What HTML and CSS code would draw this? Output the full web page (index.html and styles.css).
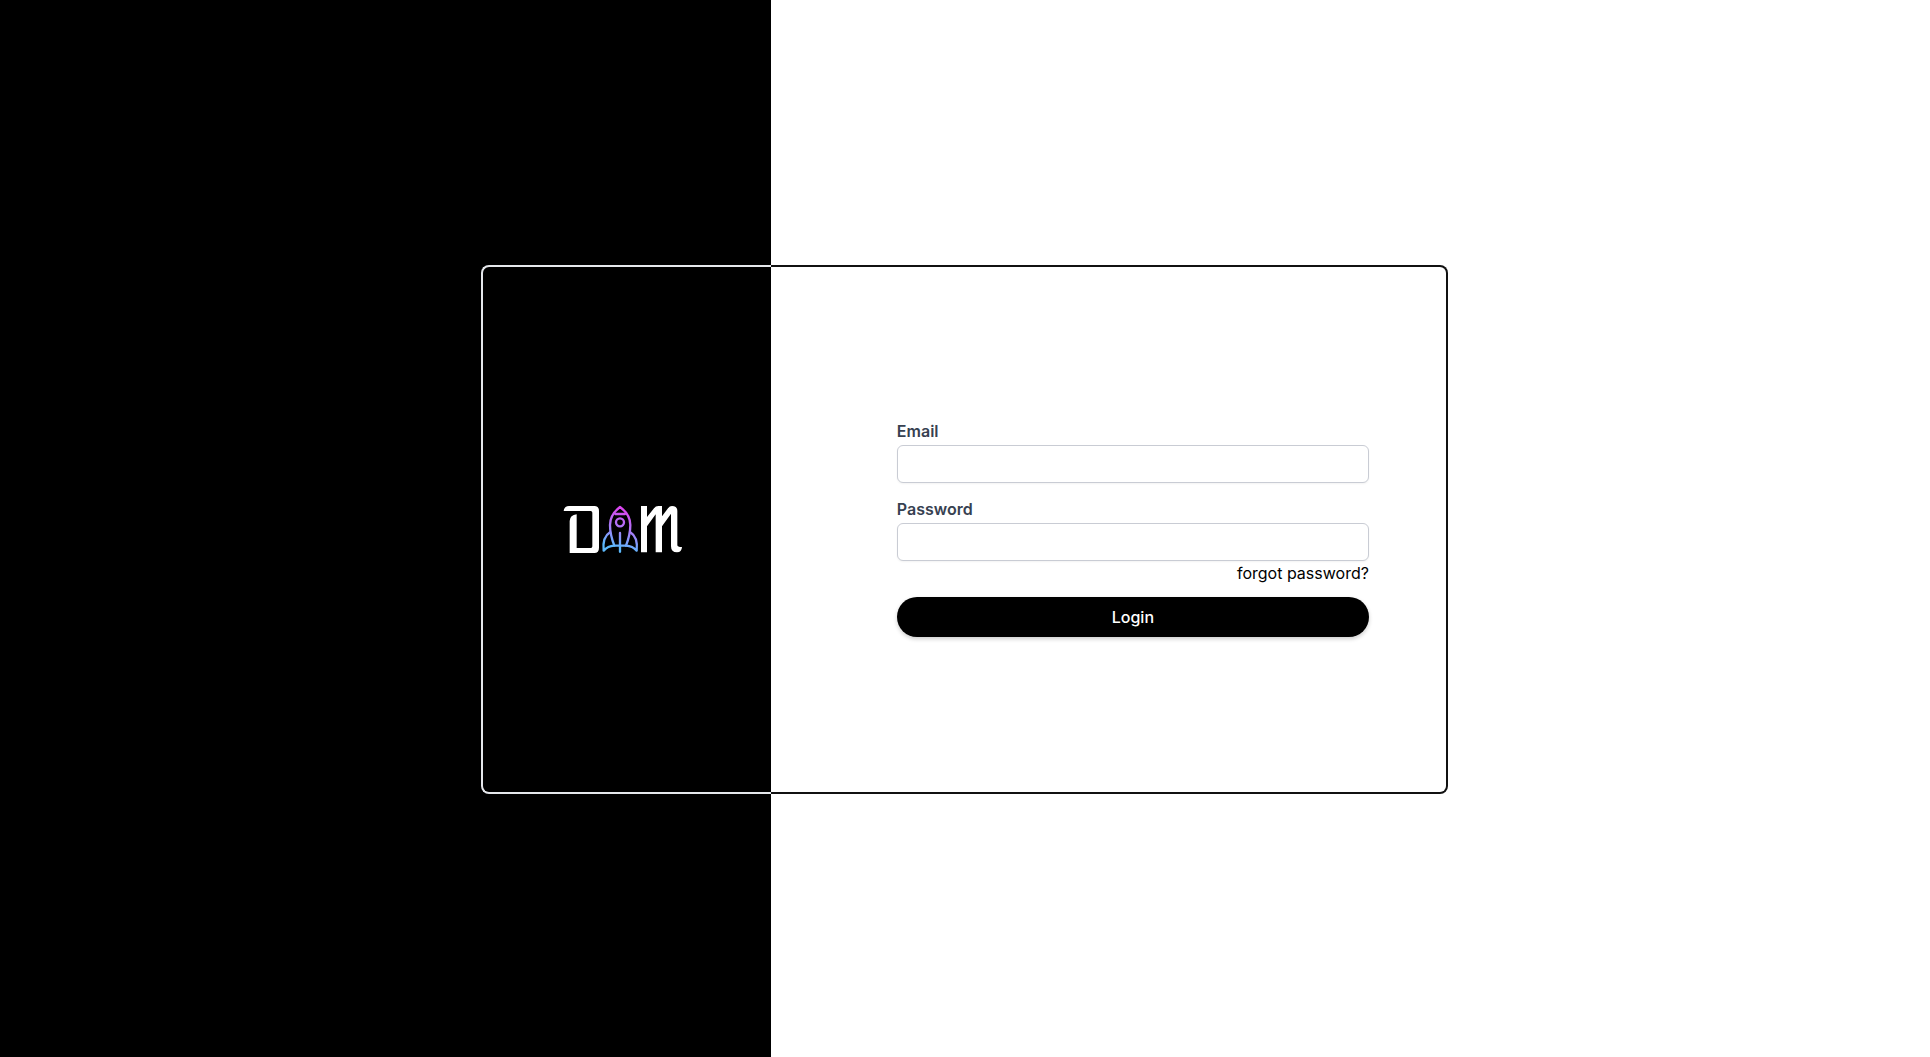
FILE: index.html
```html
<!DOCTYPE html>
<html lang="en">
<head>
<meta charset="utf-8">
<meta name="viewport" content="width=device-width, initial-scale=1">
<title>DAM – Login</title>
<link rel="stylesheet" href="styles.css">
</head>
<body>
<main class="page">
  <section class="side side-dark">
    <div class="card card-brand">
      <svg class="logo" viewBox="36 44 360 147" role="img" aria-label="DAM">
        <defs>
          <linearGradient id="rocket" gradientUnits="userSpaceOnUse" x1="225" y1="60" x2="190" y2="170">
            <stop offset="0" stop-color="#d946ef"/>
            <stop offset=".5" stop-color="#a97bf8"/>
            <stop offset="1" stop-color="#5bb8fb"/>
          </linearGradient>
        </defs>
        <path fill="#fff" d="M38 62Q40 47 54 47H130Q144 47 144 62V172Q144 188 130 188H56V92Q57 74 77 72V173H120Q124 173 124 168V67Q124 62 119 62Z"/>
        <g fill="none" stroke="url(#rocket)" stroke-width="7" stroke-linejoin="round" stroke-linecap="round">
          <path d="M207 50C186 66 177 84 177 104C177 128 183 148 190 166H225C232 148 238 128 238 104C238 84 229 66 207 50Z"/>
          <path d="M193 71H222M207 128V184"/>
          <circle cx="207" cy="96" r="12"/>
          <path d="M177 126C161 136 155 154 158 181C166 172 176 167 190 166M238 126C254 136 260 154 257 181C249 172 239 167 225 166"/>
        </g>
        <path fill="#fff" d="M270 47H288V80L309 54Q314 47 322 47H333V78L351 54Q356 47 363 47Q379 47 379 62V164Q379 170 393 170Q392 186 378 186Q360 186 360 168V70L333 108V186H314V72L288 108V186H270Z"/>
      </svg>
    </div>
  </section>
  <section class="side side-light">
    <div class="card card-form">
      <form class="form">
        <div class="field">
          <label for="email">Email</label>
          <input id="email" type="email" name="email">
        </div>
        <div class="field">
          <label for="password">Password</label>
          <input id="password" type="password" name="password">
        </div>
        <a class="forgot" href="#">forgot password?</a>
        <button class="login" type="submit">Login</button>
      </form>
    </div>
  </section>
</main>
</body>
</html>
```
FILE: styles.css
```css
* {
  box-sizing: border-box;
}

body {
  margin: 0;
  background: #fff;
  color: #000;
  font-family: Inter, "Liberation Sans", sans-serif;
  font-size: 16px;
  line-height: 24px;
}

.page {
  display: flex;
  min-height: 100vh;
}

.side {
  display: flex;
  align-items: center;
  padding-top: 2px;
}

.side-dark {
  width: 39.95%;
  justify-content: flex-end;
  background: #000;
}

.side-light {
  width: 60.05%;
}

.card {
  display: flex;
  align-items: center;
  min-height: 50vh;
  border: 2px solid;
}

.card-brand {
  width: 37.6%;
  justify-content: center;
  padding-right: 8px;
  border-color: #e5e7eb;
  border-right: 0;
  border-radius: 8px 0 0 8px;
}

.card-form {
  width: 58.4%;
  justify-content: flex-end;
  padding-right: 77px;
  padding-bottom: 3px;
  border-color: #111;
  border-left: 0;
  border-radius: 0 8px 8px 0;
}

.logo {
  width: 120px;
  height: 49px;
}

.form {
  display: flex;
  flex-direction: column;
  width: 472px;
}

.field {
  display: flex;
  flex-direction: column;
  gap: 2px;
}

.field + .field {
  margin-top: 14px;
}

.field label {
  color: #374151;
  font-weight: 600;
}

.field input {
  height: 38px;
  padding: 8px 12px;
  border: 1px solid #c9ccd4;
  border-radius: 6px;
  background: #fff;
  box-shadow: 0 1px 2px rgba(0, 0, 0, .05);
  font: inherit;
}

.forgot {
  align-self: flex-end;
  color: #000;
  text-decoration: none;
}

.login {
  height: 40px;
  margin-top: 12px;
  border: 0;
  border-radius: 20px;
  background: #000;
  box-shadow: 0 2px 4px rgba(0, 0, 0, .2);
  color: #fff;
  font: inherit;
  font-weight: 500;
}
```
